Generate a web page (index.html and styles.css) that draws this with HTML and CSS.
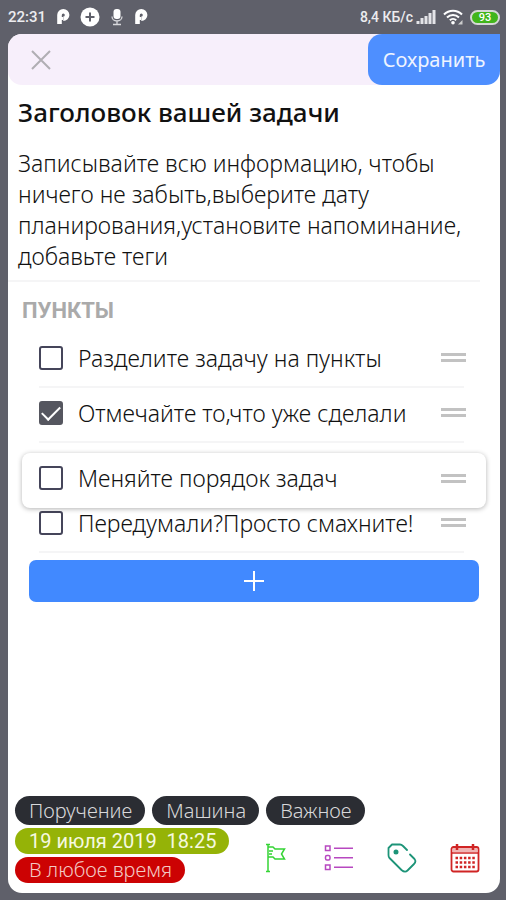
FILE: index.html
```html
<!DOCTYPE html>
<html lang="ru">
<head>
  <meta charset="UTF-8">
  <meta name="viewport" content="width=device-width, initial-scale=1.0">
  <title>Задача</title>
  <link rel="stylesheet" href="styles.css">
</head>
<body>
  <div class="status-bar">
    <div class="status-bar__group">
      <span>22:31</span>
      <svg width="14" height="18" viewBox="0 0 14 18">
        <path d="M3.500 16V7a3.800 3.800 0 1 1 3.800 3.800" fill="none" stroke="#fff" stroke-width="4.600"/>
        <path d="M2 10.500h5" stroke="#fff" stroke-width="3"/>
      </svg>
      <svg width="20" height="20" viewBox="0 0 20 20">
        <circle cx="10" cy="10" r="9.500" fill="#fff"/>
        <path d="M10 5.500v9M5.500 10h9" stroke="#5f606a" stroke-width="2"/>
      </svg>
      <svg width="14" height="18" viewBox="0 0 14 18">
        <rect x="3.500" y="1" width="7" height="10" rx="3" fill="#fff"/>
        <path d="M2 8.500a5 4.500 0 0 0 10 0M7 13v3M3 16.500h8" fill="none" stroke="#d8d8dc" stroke-width="1.300"/>
      </svg>
      <svg width="14" height="18" viewBox="0 0 14 18">
        <path d="M3.500 16V7a3.800 3.800 0 1 1 3.800 3.800" fill="none" stroke="#fff" stroke-width="4.600"/>
        <path d="M2 10.500h5" stroke="#fff" stroke-width="3"/>
      </svg>
    </div>
    <div class="status-bar__group status-bar__group--right">
      <span class="status-bar__speed">8,4 КБ/с</span>
      <svg width="20" height="16" viewBox="0 0 20 16">
        <path d="M2 15v-3M6 15V9M10 15V7M14 15V4M18 15V1" stroke="#e4e4e8" stroke-width="3"/>
      </svg>
      <svg class="status-bar__wifi" width="20" height="16" viewBox="0 0 20 16">
        <path d="M1 5.500a12.500 12.500 0 0 1 18 0M4 8.500a8.500 8.500 0 0 1 12 0M6.800 11.300a4.700 4.700 0 0 1 6.400 0" fill="none" stroke="#fff" stroke-width="2"/>
        <circle cx="10" cy="13.800" r="1.800" fill="#fff"/>
        <path d="M19.500 11v4.500H15z" fill="#ccc"/>
      </svg>
      <span class="battery">93</span>
    </div>
  </div>

  <form class="sheet">
    <header class="sheet__header">
      <button type="button" class="close-button" aria-label="Закрыть">
        <svg width="20" height="20" viewBox="0 0 20 20">
          <path d="M1 1l18 18M19 1L1 19" stroke="#b0aeb3" stroke-width="2"/>
        </svg>
      </button>
      <button type="submit" class="save-button">Сохранить</button>
    </header>

    <section class="task">
      <h1 class="task__title">Заголовок вашей задачи</h1>
      <p class="task__text">Записывайте всю информацию, чтобы ничего не забыть,выберите дату планирования,установите напоминание, добавьте теги</p>
    </section>

    <section class="points">
      <h2 class="points__title">Пункты</h2>
      <ul class="points__list">
        <li class="point">
          <label class="point__label"><input type="checkbox" class="point__check">Разделите задачу на пункты</label>
          <span class="point__handle"></span>
        </li>
        <li class="point">
          <label class="point__label"><input type="checkbox" class="point__check" checked>Отмечайте то,что уже сделали</label>
          <span class="point__handle"></span>
        </li>
        <li class="point point--dragged">
          <label class="point__label"><input type="checkbox" class="point__check">Меняйте порядок задач</label>
          <span class="point__handle"></span>
        </li>
        <li class="point">
          <label class="point__label"><input type="checkbox" class="point__check">Передумали?Просто смахните!</label>
          <span class="point__handle"></span>
        </li>
      </ul>
      <button type="button" class="add-button" aria-label="Добавить пункт">
        <svg width="20" height="20" viewBox="0 0 20 20">
          <path d="M10 0v20M0 10h20" stroke="#fff" stroke-width="2"/>
        </svg>
      </button>
    </section>

    <footer class="sheet__footer">
      <div class="tags">
        <span class="tag">Поручение</span>
        <span class="tag">Машина</span>
        <span class="tag">Важное</span>
      </div>
      <div class="footer-row">
        <div class="dates">
          <span class="tag tag--date">19 июля 2019&nbsp; 18:25</span>
          <span class="tag tag--time">В любое время</span>
        </div>
        <div class="tools">
          <button type="button" class="tool" aria-label="Флаг">
            <svg width="30" height="30" viewBox="0 0 30 30" fill="none" stroke="#35d435" stroke-width="1.500">
              <path d="M7 1v28M5 1.500h4M5 28.500h4M7 4h5l2 2h9.500l-3 5 3 5H14l-2-2H7M8 8h4M8 11h3"/>
            </svg>
          </button>
          <button type="button" class="tool" aria-label="Список">
            <svg width="30" height="30" viewBox="0 0 30 30" fill="none" stroke="#b748c0" stroke-width="1.500">
              <rect x="1.500" y="3" width="4.500" height="4.500"/>
              <rect x="1.500" y="12.500" width="4.500" height="4.500" rx="1.500"/>
              <rect x="1.500" y="22" width="4.500" height="4.500"/>
              <path d="M10 5.200h19M10 14.700h19M10 24.200h19"/>
            </svg>
          </button>
          <button type="button" class="tool" aria-label="Теги">
            <svg width="30" height="30" viewBox="0 0 30 30" fill="none" stroke="#1d9478" stroke-width="1.800" stroke-linecap="round" stroke-linejoin="round">
              <path d="M20 7l-4-4q-1.500-1.500-3-1.500H5L1.500 5v7q0 2 1 3l12 12q3.500 3 6 .500l6.500-6.500q2.500-2.500 .500-5L23 11.500"/>
              <circle cx="9" cy="9" r="1.600" fill="#1d9478"/>
            </svg>
          </button>
          <button type="button" class="tool" aria-label="Календарь">
            <svg width="30" height="30" viewBox="0 0 30 30" fill="none" stroke="#d02424">
              <rect x="1.500" y="4" width="27" height="24.500" rx="2" stroke-width="1.800"/>
              <path d="M3 7h24" stroke="#f0b4b4" stroke-width="4"/>
              <path d="M2 10h26" stroke-width="1.500"/>
              <path d="M7 1v6M23 1v6" stroke-width="2.500"/>
              <path d="M5.500 15h20M5.500 19.500h20M5.500 24h20" stroke-width="2.500" stroke-dasharray="2.500 1.700"/>
            </svg>
          </button>
        </div>
      </div>
    </footer>
  </form>
</body>
</html>
```
FILE: styles.css
```css
:root {
  --frame: #5f606a;
  --blue: #4189ff;
  --blue-light: #4e8fff;
  --header: #f7effb;
  --line: #f5f5f6;
  --text: #111;
  --dark: #2b2d33;
  --green: #95b307;
  --red: #cc0203;
}

* {
  box-sizing: border-box;
}

body {
  margin: 0;
  min-height: 100vh;
  padding: 0 6px 7px 8px;
  display: flex;
  flex-direction: column;
  background: var(--frame);
  font-family: "Noto Sans", "Open Sans", sans-serif;
  color: var(--text);
}

button {
  border: none;
  padding: 0;
  font-family: inherit;
  cursor: pointer;
}

svg {
  display: block;
}

/* Status bar */
.status-bar {
  height: 34px;
  display: flex;
  justify-content: space-between;
  align-items: center;
  color: #ececef;
  font: 500 15px Roboto, sans-serif;
}

.status-bar__group {
  display: flex;
  align-items: center;
  gap: 10px;
}

.status-bar__group--right {
  gap: 3px;
}

.status-bar__speed {
  font-size: 14px;
}

.status-bar__wifi {
  margin: 0 4px;
}

.battery {
  width: 30px;
  height: 15px;
  border: 2px solid #d5d8d5;
  border-radius: 8px;
  background: #41b51b;
  color: #fff;
  font-size: 11px;
  line-height: 11px;
  text-align: center;
}

/* Sheet */
.sheet {
  flex: 1;
  display: flex;
  flex-direction: column;
  background: #fff;
  border-radius: 14px 0 14px 14px;
  overflow: hidden;
}

.sheet__header {
  display: flex;
  justify-content: space-between;
  height: 51px;
  background: linear-gradient(to right, var(--header) 85%, #fff 85%);
  border-bottom-left-radius: 14px;
}

.close-button {
  padding: 0 23px;
  background: none;
}

.save-button {
  width: 132px;
  border-radius: 14px 0 14px 14px;
  background: var(--blue-light);
  color: #eef4ff;
  font-size: 20px;
}

.task {
  padding: 9px 10px 8px;
}

.task__title {
  margin: 0 0 18px;
  font-size: 26px;
  font-weight: 500;
  line-height: 36px;
  color: #111;
}

.task__text {
  margin: 0;
  font-size: 23px;
  font-weight: 300;
  line-height: 31px;
}

/* Points */
.points {
  margin-right: 20px;
  border-top: 2px solid var(--line);
}

.points__title {
  margin: 0;
  padding: 15px 14px 8px;
  color: #aaa;
  font: 700 22px/28px Roboto, sans-serif;
  text-transform: uppercase;
}

.points__list {
  margin: 0;
  padding: 0 16px 0 31px;
  list-style: none;
}

.point {
  height: 55px;
  padding-bottom: 4px;
  display: flex;
  justify-content: space-between;
  align-items: center;
  border-bottom: 2px solid var(--line);
}

.point__label {
  display: flex;
  align-items: center;
  gap: 15px;
  font-size: 23px;
  font-weight: 300;
  white-space: nowrap;
}

.point__check {
  appearance: none;
  width: 24px;
  height: 24px;
  margin: 0;
  border: 2px solid #45455a;
  border-radius: 3px;
  background: #fff;
}

.point__check:checked {
  display: grid;
  place-items: center;
  background: #55565f;
  border-color: #55565f;
}

.point__check:checked::after {
  content: "";
  width: 16px;
  height: 8px;
  border: solid #fff;
  border-width: 0 0 2px 2px;
  transform: translateY(-2px) rotate(-45deg);
}

.point__handle {
  width: 25px;
  height: 9px;
  margin-right: -2px;
  border: solid #c2c2c2;
  border-width: 3px 0;
}

/* The row being moved floats above its neighbours */
.point--dragged {
  position: relative;
  top: 10px;
  margin: 0 -22px 0 -17px;
  padding: 0 22px 5px 17px;
  border: none;
  border-radius: 8px;
  background: #fff;
  box-shadow: 0 1px 5px rgba(0, 0, 0, 0.3);
}

.add-button {
  width: calc(100% - 22px);
  height: 42px;
  margin: 7px 0 0 21px;
  display: grid;
  place-items: center;
  border-radius: 7px;
  background: var(--blue);
}

/* Footer */
.sheet__footer {
  margin-top: auto;
  padding: 0 20px 10px 7px;
}

.tags {
  display: flex;
  gap: 7px;
}

.tag {
  padding: 0 13px 0 14px;
  border-radius: 15px;
  background: var(--dark);
  color: #d8d8da;
  font-size: 20px;
  font-weight: 300;
  line-height: 29px;
  white-space: nowrap;
}

.footer-row {
  display: flex;
  justify-content: space-between;
  align-items: center;
}

.dates {
  display: flex;
  flex-direction: column;
  align-items: flex-start;
  gap: 3px;
  padding-top: 3px;
}

.tag--date {
  background: var(--green);
  color: #f6f9e0;
  font-family: Roboto, sans-serif;
  font-weight: 400;
  line-height: 26px;
}

.tag--time {
  background: var(--red);
  color: #f3c9c4;
  line-height: 26px;
}

.tools {
  display: flex;
  gap: 33px;
  padding-top: 8px;
}

.tool {
  background: none;
}
```
